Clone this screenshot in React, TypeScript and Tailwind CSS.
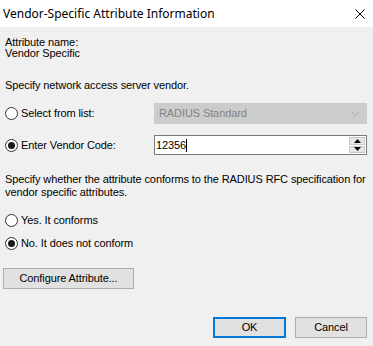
import React from "react";

function Radio({ checked }: { checked?: boolean }) {
  return (
    <span className="w-[13px] h-[13px] rounded-full border border-[#333333] bg-white flex items-center justify-center shrink-0">
      {checked && <span className="w-[7px] h-[7px] rounded-full bg-[#1a1a1a]" />}
    </span>
  );
}

export default function App() {
  return (
    <div
      className="w-[373px] h-[346px] bg-[#f0f0f0] text-black overflow-hidden flex flex-col"
      style={{ fontFamily: '"Liberation Sans", Arial, sans-serif' }}
    >
      <div className="h-[27px] bg-white flex items-center justify-between pl-[3px] pr-[6px] shrink-0">
        <span
          className="text-[12px] leading-none"
          style={{ fontFamily: '"Noto Sans", "Open Sans", sans-serif' }}
        >
          Vendor-Specific Attribute Information
        </span>
        <svg width="10" height="10" viewBox="0 0 10 10" className="mr-[2px]">
          <path d="M0.5 0.5 L9.5 9.5 M9.5 0.5 L0.5 9.5" stroke="#000" strokeWidth="1" />
        </svg>
      </div>

      <div className="flex flex-col px-[5px] text-[11px] tracking-[-0.1px]">
        <div className="mt-[10px] leading-[11px]">
          <div>Attribute name:</div>
          <div>Vendor Specific</div>
        </div>

        <div className="mt-[20px] leading-[13px]">Specify network access server vendor.</div>

        <div className="mt-[11px] flex items-center h-[21px]">
          <div className="w-[149px] flex items-center gap-[3px]">
            <Radio />
            <span>Select from list:</span>
          </div>
          <div className="w-[213px] h-[21px] bg-[#cccccc] border border-[#cccccc] flex items-center justify-between pl-[4px] pr-[6px]">
            <span className="text-[#838383]">RADIUS Standard</span>
            <svg width="9" height="5" viewBox="0 0 9 5">
              <path d="M0.5 0.5 L4.5 4.5 L8.5 0.5" fill="none" stroke="#a6a6a6" strokeWidth="1" />
            </svg>
          </div>
        </div>

        <div className="mt-[11px] flex items-center h-[20px]">
          <div className="w-[149px] flex items-center gap-[3px]">
            <Radio checked />
            <span>Enter Vendor Code:</span>
          </div>
          <div className="w-[213px] h-[20px] bg-white border border-[#7a7a7a] flex items-stretch">
            <div className="flex-1 flex items-center pl-[1px]">
              <span>12356</span>
              <span className="w-px h-[13px] bg-black" />
            </div>
            <div className="w-[17px] flex flex-col gap-[1px] py-[1px] pr-[1px]">
              <div className="flex-1 bg-[#e6e6e6] border border-[#c8c8c8] flex items-center justify-center">
                <svg width="7" height="4" viewBox="0 0 7 4">
                  <path d="M0 4 L3.5 0 L7 4 Z" fill="#000" />
                </svg>
              </div>
              <div className="flex-1 bg-[#e6e6e6] border border-[#c8c8c8] flex items-center justify-center">
                <svg width="7" height="4" viewBox="0 0 7 4">
                  <path d="M0 0 L3.5 4 L7 0 Z" fill="#000" />
                </svg>
              </div>
            </div>
          </div>
        </div>

        <div className="mt-[18px] leading-[13px] whitespace-nowrap">
          <div>Specify whether the attribute conforms to the RADIUS RFC specification for</div>
          <div>vendor specific attributes.</div>
        </div>

        <div className="mt-[15px] flex items-center gap-[3px] h-[13px]">
          <Radio />
          <span>Yes. It conforms</span>
        </div>

        <div className="mt-[10px] flex items-center gap-[3px] h-[13px]">
          <Radio checked />
          <span>No. It does not conform</span>
        </div>

        <div className="mt-[18px] -ml-[2px]">
          <div className="w-[131px] h-[21px] bg-[#e1e1e1] border border-[#adadad] flex items-center justify-center">
            Configure Attribute...
          </div>
        </div>

        <div className="mt-[28px] flex justify-end gap-[9px] pr-[1px]">
          <div className="w-[73px] h-[21px] bg-[#e1e1e1] border-2 border-[#0078d7] flex items-center justify-center">
            OK
          </div>
          <div className="w-[72px] h-[21px] bg-[#e1e1e1] border border-[#adadad] flex items-center justify-center">
            Cancel
          </div>
        </div>
      </div>
    </div>
  );
}
